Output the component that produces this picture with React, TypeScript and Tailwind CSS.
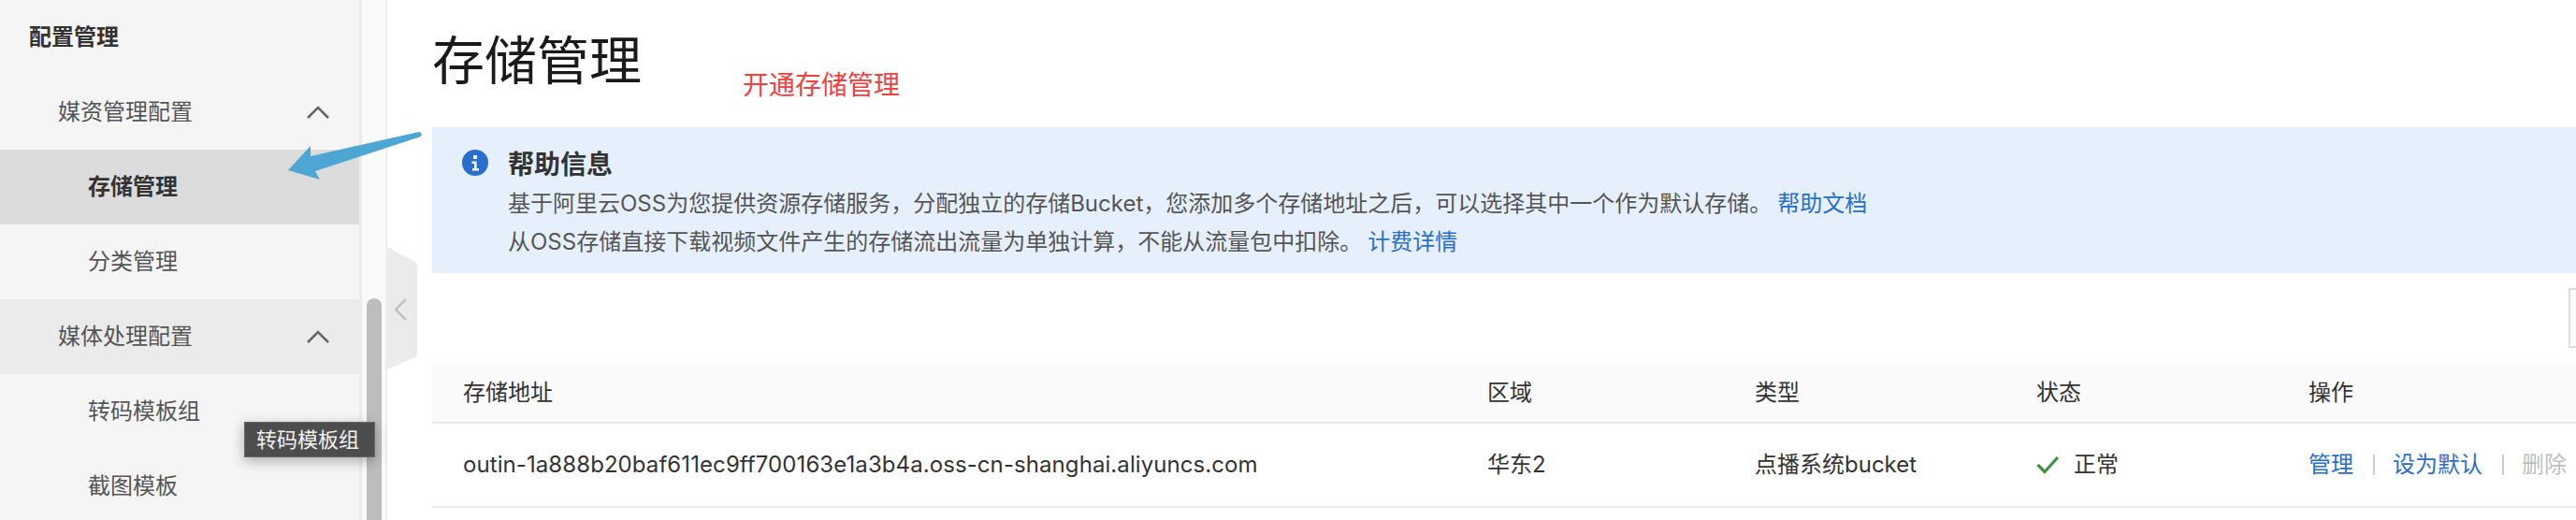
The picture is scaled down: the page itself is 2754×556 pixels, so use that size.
const cjk = "font-['Inter','Noto_Sans_CJK_SC',sans-serif]";

function ChevronUp({ className }: { className?: string }) {
  return (
    <svg viewBox="0 0 24 14" className={className} fill="none" stroke="#666666" strokeWidth="2.6">
      <path d="M1 13 L12 2 L23 13" />
    </svg>
  );
}

function SideGroup({ label, hover }: { label: string; hover?: boolean }) {
  return (
    <div className={"h-20 flex items-center justify-between pl-[62px] pr-8 text-[#555555] " + (hover ? "bg-[#ebebeb]" : "")}>
      <span>{label}</span>
      <ChevronUp className="w-6 h-[14px]" />
    </div>
  );
}

function SideItem({ label, active }: { label: string; active?: boolean }) {
  return (
    <div className={"h-20 flex items-center pl-[94px] " + (active ? "bg-[#dcdcdc] font-bold text-[#333333]" : "text-[#555555]")}>
      {label}
    </div>
  );
}

function Sidebar() {
  return (
    <aside className="relative w-[387px] shrink-0 h-full bg-[#f5f5f5] border-r-[3px] border-[#ebebeb] text-2xl overflow-hidden">
      <div className="h-20 flex items-center pl-[31px] font-bold text-[#333333]">配置管理</div>
      <SideGroup label="媒资管理配置" />
      <SideItem label="存储管理" active />
      <SideItem label="分类管理" />
      <SideGroup label="媒体处理配置" hover />
      <SideItem label="转码模板组" />
      <SideItem label="截图模板" />
    </aside>
  );
}

function HelpBanner() {
  return (
    <div className="mt-[46px] h-[156px] bg-[#e6f0fd] flex pl-8 pt-6">
      <svg viewBox="0 0 28 28" className="w-7 h-7 shrink-0">
        <circle cx="14" cy="14" r="14" fill="#2a6ecb" />
        <rect x="12" y="6" width="4" height="4" fill="#ffffff" />
        <path d="M10.5 12.5 H15.5 V20 H18 V22.5 H11 V20 H13 V15 H10.5 Z" fill="#ffffff" />
      </svg>
      <div className="ml-[21px]">
        <div className="mt-0.5 text-[28px] leading-7 font-bold text-[#333333]">帮助信息</div>
        <div className="mt-[7px] text-2xl leading-[41px] text-[#555555]">
          <p>
            基于阿里云OSS为您提供资源存储服务，分配独立的存储Bucket，您添加多个存储地址之后，可以选择其中一个作为默认存储。
            <span className="ml-1.5 text-[#2a6ecb]">帮助文档</span>
          </p>
          <p>
            从OSS存储直接下载视频文件产生的存储流出流量为单独计算，不能从流量包中扣除。
            <span className="ml-1.5 text-[#2a6ecb]">计费详情</span>
          </p>
        </div>
      </div>
    </div>
  );
}

function StorageTable() {
  return (
    <div className="text-2xl text-[#333333]">
      <div className="h-[65px] bg-[#fafafa] border-b-2 border-[#ebebeb] flex items-center">
        <div className="w-[1128px] pl-[33px]">存储地址</div>
        <div className="w-[286px]">区域</div>
        <div className="w-[301px]">类型</div>
        <div className="w-[291px]">状态</div>
        <div>操作</div>
      </div>
      <div className="h-[90px] border-b-2 border-[#ebebeb] flex items-center">
        <div className="w-[1128px] pl-[33px] whitespace-nowrap tracking-[0.08px]">outin-1a888b20baf611ec9ff700163e1a3b4a.oss-cn-shanghai.aliyuncs.com</div>
        <div className="w-[286px]">华东2</div>
        <div className="w-[301px]">点播系统bucket</div>
        <div className="w-[291px] flex items-center gap-4">
          <svg viewBox="0 0 24 20" className="w-6 h-5" fill="none" stroke="#3f8f45" strokeWidth="3.2">
            <path d="M1.5 10 L9 17.5 L23 2" />
          </svg>
          <span>正常</span>
        </div>
        <div className="flex items-center whitespace-nowrap">
          <span className="text-[#2a6ecb]">管理</span>
          <span className="ml-[21px] mr-[19px] w-0.5 h-[22px] bg-[#cccccc]" />
          <span className="text-[#2a6ecb]">设为默认</span>
          <span className="ml-[21px] mr-[19px] w-0.5 h-[22px] bg-[#cccccc]" />
          <span className="text-[#bfbfbf]">删除</span>
        </div>
      </div>
    </div>
  );
}

export default function App() {
  return (
    <div className={"relative flex w-[2754px] h-[556px] overflow-hidden bg-white " + cjk}>
      <Sidebar />
      {/* gutter with scrollbar */}
      <div className="w-[27px] shrink-0 h-full bg-[#fafafa] border-r-2 border-[#eeeeee]" />
      <main className="flex-1 pl-12 min-w-0">
        <div className="flex items-start h-[90px]">
          <h1 className="mt-[34px] text-[56px] leading-[62px] text-[#1a1a1a]">存储管理</h1>
          <span className="ml-[108px] mt-[73px] text-[28px] leading-9 text-[#f04040]">开通存储管理</span>
        </div>
        <HelpBanner />
        <div className="h-24 relative">
          <div className="absolute right-0 top-4 w-2 h-16 bg-[#fafafa] border-2 border-r-0 border-[#dddddd]" />
        </div>
        <StorageTable />
      </main>

      {/* sidebar scrollbar */}
      <div className="absolute left-[392px] top-[319px] w-4 h-[260px] rounded-full bg-[#bdbdbd]" />

      {/* collapse tab */}
      <svg className="absolute left-[414px] top-[264px]" width="33" height="132" viewBox="0 0 33 132">
        <path d="M0 0 L26 14 Q32 16 32 20 V117 L0 131 Z" fill="#ebebeb" />
        <path d="M20 56 L9 67 L20 78" fill="none" stroke="#bfbfbf" strokeWidth="2.4" />
      </svg>

      {/* tooltip */}
      <div className="absolute left-[261px] top-[451px] w-[140px] h-[38px] flex items-center pl-[12px] bg-[#4d4d4d] border border-[#666666] text-[22px] text-[#f2f2f2] shadow-[0_4px_14px_rgba(0,0,0,0.3)]">
        转码模板组
      </div>

      {/* annotation arrow */}
      <svg className="absolute left-0 top-0" width="460" height="200" viewBox="0 0 460 200">
        <path d="M308 182 L332 156 L332 167 L448 141 Q452 142 450 146 L337 183 L342 192 Z" fill="#4da6d3" />
      </svg>
    </div>
  );
}
